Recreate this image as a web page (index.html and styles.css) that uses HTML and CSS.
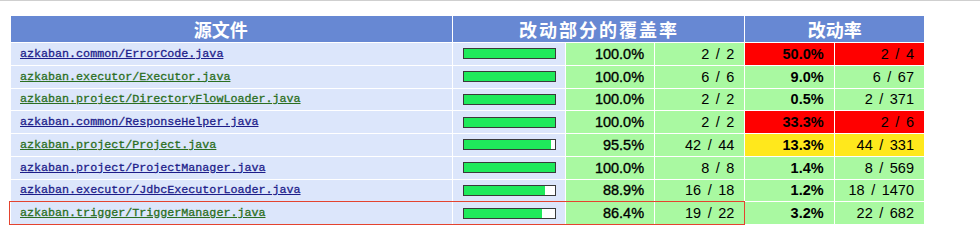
FILE: index.html
```html
<!DOCTYPE html>
<html lang="zh">
<head>
<meta charset="utf-8">
<link rel="stylesheet" href="styles.css">
</head>
<body>
<div class="topline"></div>
<div class="wrap">
<table class="cov">
  <colgroup>
    <col class="c-file"><col class="c-bar"><col class="c-num"><col class="c-num2"><col class="c-num"><col class="c-num2">
  </colgroup>
  <thead>
    <tr>
      <th class="h-file">源文件</th>
      <th colspan="3" class="h-cov">改动部分的覆盖率</th>
      <th colspan="2">改动率</th>
    </tr>
  </thead>
  <tbody>
    <tr>
      <td class="file"><a class="blue" href="#">azkaban.common/ErrorCode.java</a></td>
      <td class="barcell"><div class="bar"><div class="fill" style="width:100%"></div></div></td>
      <td class="num pct g">100.0%</td><td class="num g">2 / 2</td>
      <td class="num bold r">50.0%</td><td class="num r">2 / 4</td>
    </tr>
    <tr>
      <td class="file"><a class="green" href="#">azkaban.executor/Executor.java</a></td>
      <td class="barcell"><div class="bar"><div class="fill" style="width:100%"></div></div></td>
      <td class="num pct g">100.0%</td><td class="num g">6 / 6</td>
      <td class="num bold g">9.0%</td><td class="num g">6 / 67</td>
    </tr>
    <tr>
      <td class="file"><a class="green" href="#">azkaban.project/DirectoryFlowLoader.java</a></td>
      <td class="barcell"><div class="bar"><div class="fill" style="width:100%"></div></div></td>
      <td class="num pct g">100.0%</td><td class="num g">2 / 2</td>
      <td class="num bold g">0.5%</td><td class="num g">2 / 371</td>
    </tr>
    <tr>
      <td class="file"><a class="blue" href="#">azkaban.common/ResponseHelper.java</a></td>
      <td class="barcell"><div class="bar"><div class="fill" style="width:100%"></div></div></td>
      <td class="num pct g">100.0%</td><td class="num g">2 / 2</td>
      <td class="num bold r">33.3%</td><td class="num r">2 / 6</td>
    </tr>
    <tr>
      <td class="file"><a class="green" href="#">azkaban.project/Project.java</a></td>
      <td class="barcell"><div class="bar"><div class="fill" style="width:95.5%"></div></div></td>
      <td class="num pct g">95.5%</td><td class="num g">42 / 44</td>
      <td class="num bold y">13.3%</td><td class="num y">44 / 331</td>
    </tr>
    <tr>
      <td class="file"><a class="blue" href="#">azkaban.project/ProjectManager.java</a></td>
      <td class="barcell"><div class="bar"><div class="fill" style="width:100%"></div></div></td>
      <td class="num pct g">100.0%</td><td class="num g">8 / 8</td>
      <td class="num bold g">1.4%</td><td class="num g">8 / 569</td>
    </tr>
    <tr>
      <td class="file"><a class="blue" href="#">azkaban.executor/JdbcExecutorLoader.java</a></td>
      <td class="barcell"><div class="bar"><div class="fill" style="width:88.9%"></div></div></td>
      <td class="num pct g">88.9%</td><td class="num g">16 / 18</td>
      <td class="num bold g">1.2%</td><td class="num g">18 / 1470</td>
    </tr>
    <tr>
      <td class="file"><a class="green" href="#">azkaban.trigger/TriggerManager.java</a></td>
      <td class="barcell"><div class="bar"><div class="fill" style="width:86.4%"></div></div></td>
      <td class="num pct g">86.4%</td><td class="num g">19 / 22</td>
      <td class="num bold g">3.2%</td><td class="num g">22 / 682</td>
    </tr>
  </tbody>
</table>
<div class="highlight"></div>
</div>
</body>
</html>
```
FILE: styles.css
```css
html, body {
  margin: 0;
  padding: 0;
  background: #ffffff;
}
.topline {
  height: 1px;
  background: #cfcfcf;
}
.wrap {
  position: relative;
  padding: 14px 0 0 10px;
}
.cov {
  border-collapse: separate;
  border-spacing: 1px;
  table-layout: fixed;
  width: 915px;
  font-family: "Liberation Sans", Arial, sans-serif;
}
.c-file { width: 440px; }
.c-bar { width: 111px; }
.c-num { width: 88px; }
.c-num2 { width: 89px; }
.cov th {
  background: #6788d3;
  color: #ffffff;
  font-family: "Noto Sans CJK SC", sans-serif;
  font-weight: bold;
  font-size: 18px;
  height: 26px;
  padding: 0;
  line-height: 26px;
  text-align: center;
}
.cov th.h-file { padding-right: 22px; }
.cov th.h-cov { letter-spacing: 2px; }
.cov td {
  height: 21.75px;
  padding: 0;
  vertical-align: middle;
}
.file {
  background: #dce6fb;
  padding-left: 9px !important;
  font-family: "Liberation Mono", "Courier New", monospace;
  font-size: 11.7px;
  white-space: nowrap;
}
.file a {
  text-decoration: underline;
  -webkit-text-stroke: 0.3px currentColor;
}
.file a.blue { color: #1d1d8a; }
.file a.green { color: #2a6e21; }
.barcell {
  background: #dce6fb;
}
.bar {
  width: 91px;
  height: 9px;
  margin: 0 auto;
  border: 1px solid #3a3a3a;
  background: #ffffff;
  display: flex;
}
.fill {
  background: #1fea5b;
  height: 100%;
}
.num {
  text-align: right;
  padding-right: 10px !important;
  font-size: 14.5px;
  word-spacing: 2.5px;
  color: #000000;
}
.pct { -webkit-text-stroke: 0.35px #000000; }
.bold { font-weight: bold; }
.g { background: #a9f9a1; }
.r { background: #ff0000; }
.y { background: #ffe81c; }
.highlight {
  position: absolute;
  left: 9px;
  top: 200px;
  width: 734px;
  height: 22px;
  border: 1.5px solid #e4432f;
}
```
